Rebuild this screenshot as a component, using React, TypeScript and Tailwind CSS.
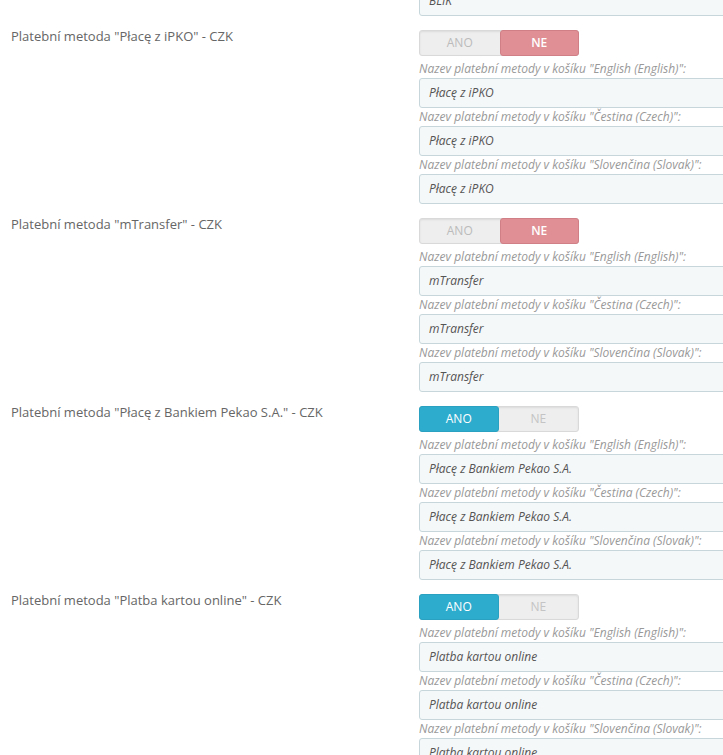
import React from 'react';

interface PaymentMethod {
  name: string;
  enabled: boolean;
}

const methods: PaymentMethod[] = [
  { name: 'Płacę z iPKO', enabled: false },
  { name: 'mTransfer', enabled: false },
  { name: 'Płacę z Bankiem Pekao S.A.', enabled: true },
  { name: 'Platba kartou online', enabled: true },
];

const languages = ['English (English)', 'Čestina (Czech)', 'Slovenčina (Slovak)'];

function Toggle({ enabled }: { enabled: boolean }) {
  return (
    <div className="flex w-[160px] h-[26px] rounded-[3px] bg-[#eeeeee] border border-[#d9d9d9] shadow-[inset_0_1px_2px_rgba(0,0,0,0.08)] text-[12px] leading-[24px] text-center">
      <span
        className={
          enabled
            ? 'w-[80px] -my-px -ml-px rounded-[3px] bg-[#2eacce] text-white border border-[#2aa1c1] leading-[24px]'
            : 'w-[80px] text-[#bbbbbb]'
        }
      >
        ANO
      </span>
      <span
        className={
          !enabled
            ? 'w-[80px] -my-px -mr-px rounded-[3px] bg-[#e08f95] text-white font-semibold border border-[#d07f86] leading-[24px]'
            : 'w-[80px] text-[#c4c4c4]'
        }
      >
        NE
      </span>
    </div>
  );
}

function TextField({ value }: { value: string }) {
  return (
    <div className="w-[360px] h-[30px] rounded-[3px] border border-[#c7d6db] bg-[#f5f8f9] px-[9px] text-[12px] leading-[28px] italic text-[#555555]">
      {value}
    </div>
  );
}

export default function App() {
  return (
    <div
      className="w-[723px] h-[755px] overflow-hidden bg-white"
      style={{ fontFamily: '"Open Sans", Arial, sans-serif' }}
    >
      <div className="flex">
        <div className="w-[419px] shrink-0" />
        <div className="-mt-[14px] shrink-0">
          <TextField value="BLIK" />
        </div>
      </div>

      {methods.map((m) => (
        <div key={m.name} className="flex mt-[11px]">
          <div className="w-[419px] shrink-0 pl-[11px] text-[13px] leading-[18px] text-[#666666]">
            Platební metoda "{m.name}" - CZK
          </div>
          <div className="pt-[3px] shrink-0">
            <Toggle enabled={m.enabled} />
            <div className="mt-[4px]">
              {languages.map((lang) => (
                <div key={lang}>
                  <p className="text-[12px] leading-[18px] italic text-[#999999] whitespace-nowrap">
                    Nazev platební metody v košíku "{lang}":
                  </p>
                  <TextField value={m.name} />
                </div>
              ))}
            </div>
          </div>
        </div>
      ))}
    </div>
  );
}
